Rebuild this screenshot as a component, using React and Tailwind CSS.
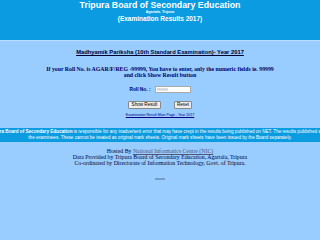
// Tripura Board result page, shrunk to a 320px window.
import { useState } from "react";

function App() {
  const [roll, setRoll] = useState("");

  return (
    <div className="min-h-screen bg-[#99ccff] overflow-hidden">
      {/* header */}
      <div className="h-[40px] bg-[#0a9be0] text-white text-center font-['Liberation_Sans',Arial,sans-serif] font-bold">
        <div className="text-[8.8px] leading-[10px]">Tripura Board of Secondary Education</div>
        <div className="text-[3.6px] leading-[5px]">Agartala, Tripura</div>
        <div className="text-[6.5px] leading-[7px]">(Examination Results 2017)</div>
      </div>
      <div className="h-px bg-[#b8dcff]" />

      {/* form */}
      <div className="text-center pt-[7px]">
        <div className="text-[5.8px] leading-[8px] font-bold underline text-[#000033] font-['Liberation_Sans',Arial,sans-serif]">
          Madhyamik Pariksha (10th Standard Examination)- Year 2017
        </div>

        <div className="mt-[10px] text-[5.8px] leading-[6px] font-bold text-[#000066] font-['Liberation_Serif','Times_New_Roman',serif]">
          If your Roll No. is AGAR/F/REG -99999, You have to enter, only the numeric fields ie. 99999
          <br />
          and click Show Result button
        </div>

        <div className="mt-[8px] flex justify-center items-center gap-[4px]">
          <span className="text-[4.8px] font-bold text-[#000066] font-['Liberation_Sans',Arial,sans-serif]">
            Roll No. :
          </span>
          <input
            className="w-[36px] h-[7px] bg-white border border-[#aaaaaa] text-[4px] px-[1px] outline-none font-['Liberation_Sans',Arial,sans-serif]"
            placeholder="99999"
            value={roll}
            onChange={(e) => setRoll(e.target.value)}
          />
        </div>

        <div className="mt-[8px] flex justify-center gap-[13px]">
          <button className="w-[33px] h-[8px] bg-[#eeeeee] border border-[#888888] rounded-[1px] text-[4.6px] leading-none text-black font-['Liberation_Sans',Arial,sans-serif]">
            Show Result
          </button>
          <button
            onClick={() => setRoll("")}
            className="w-[18px] h-[8px] bg-[#eeeeee] border border-[#888888] rounded-[1px] text-[4.6px] leading-none text-black font-['Liberation_Sans',Arial,sans-serif]"
          >
            Reset
          </button>
        </div>

        <div className="mt-[4px] text-[3.6px] leading-[5px] underline text-[#000080] font-['Liberation_Sans',Arial,sans-serif]">
          Examination Result Main Page - Year 2017
        </div>
      </div>

      {/* disclaimer band */}
      <div className="mt-[10px] h-[14px] bg-[#0a9be0] flex flex-col items-center justify-center text-white text-[4.6px] leading-[6px] font-['Liberation_Sans',Arial,sans-serif] whitespace-nowrap">
        <div>
          <b>Tripura Board of Secondary Education</b> is responsible for any inadvertent error that may have crept in the results being published on NET. The results published are for
        </div>
        <div>
          the examinees. These cannot be treated as original mark sheets. Original mark sheets have been issued by the Board separately.
        </div>
      </div>

      {/* footer */}
      <div className="mt-[6px] text-center text-[5.8px] leading-[6px] text-[#000033] font-['Liberation_Serif','Times_New_Roman',serif]">
        <div>
          Hosted By{" "}
          <span className="underline text-[#555577]">National Informatics Centre (NIC)</span>
        </div>
        <div>Data Provided by Tripura Board of Secondary Education, Agartala, Tripura</div>
        <div>Co-ordinated by Directorate of Information Technology, Govt. of Tripura.</div>
      </div>

      <div className="mt-[12px] mx-auto w-[10px] h-[2px] bg-[#7799cc]" />
    </div>
  );
}

export default App;
